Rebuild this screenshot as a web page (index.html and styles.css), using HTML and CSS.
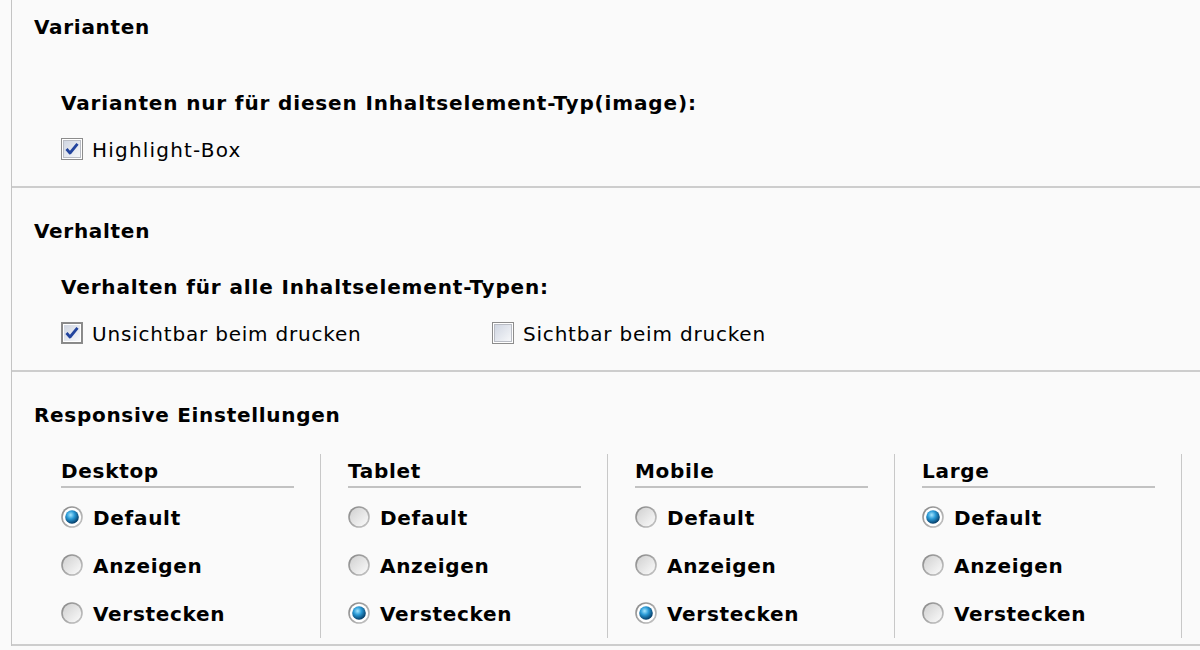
FILE: index.html
```html
<!DOCTYPE html>
<html lang="de">
<head>
<meta charset="utf-8">
<title>Inhaltselement Einstellungen</title>
<link rel="stylesheet" href="styles.css">
</head>
<body>
<svg class="defs" width="0" height="0" aria-hidden="true">
  <defs>
    <linearGradient id="cbFill" x1="0" y1="0" x2="1" y2="1">
      <stop offset="0" stop-color="#cfd5e1"/>
      <stop offset="1" stop-color="#f7f8fa"/>
    </linearGradient>
    <linearGradient id="rdRing" x1="0" y1="0" x2="1" y2="1">
      <stop offset="0" stop-color="#858585"/>
      <stop offset="1" stop-color="#c8c8c8"/>
    </linearGradient>
    <linearGradient id="rdFill" x1="0" y1="0" x2="1" y2="1">
      <stop offset="0" stop-color="#d0d0d0"/>
      <stop offset="1" stop-color="#fbfbfb"/>
    </linearGradient>
    <radialGradient id="rdDot" cx="0.4" cy="0.35" r="0.65">
      <stop offset="0" stop-color="#a6e6ff"/>
      <stop offset="0.45" stop-color="#2a9ad6"/>
      <stop offset="1" stop-color="#053d68"/>
    </radialGradient>
  </defs>
</svg>
<div class="panel">
  <section class="section first">
    <h2 class="title">Varianten</h2>
    <div class="group group-wide">
      <div class="group-title">Varianten nur für diesen Inhaltselement-Typ(image):</div>
      <div class="options">
        <label class="opt">
          <svg class="box" width="22" height="22" viewBox="0 0 22 22"><rect x="0.5" y="0.5" width="21" height="21" fill="#fff" stroke="#8c8c8c"/><rect x="2.5" y="2.5" width="17" height="17" fill="url(#cbFill)" stroke="#b9bcc4"/><path d="M5.5 11 L9 15 L16.5 5.8" fill="none" stroke="#22449e" stroke-width="2.8" stroke-linejoin="round"/></svg>
          <span class="wide">Highlight-Box</span>
        </label>
      </div>
    </div>
  </section>
  <section class="section">
    <h2 class="title">Verhalten</h2>
    <div class="group">
      <div class="group-title">Verhalten für alle Inhaltselement-Typen:</div>
      <div class="options">
        <label class="opt opt-first">
          <svg class="box" width="22" height="22" viewBox="0 0 22 22"><rect x="0.5" y="0.5" width="21" height="21" fill="#fff" stroke="#8c8c8c"/><rect x="1.5" y="1.5" width="19" height="19" fill="none" stroke="#111" stroke-dasharray="1 1"/><rect x="3" y="3" width="16" height="16" fill="url(#cbFill)"/><path d="M5.5 11 L9 15 L16.5 5.8" fill="none" stroke="#22449e" stroke-width="2.8" stroke-linejoin="round"/></svg>
          <span>Unsichtbar beim drucken</span>
        </label>
        <label class="opt">
          <svg class="box" width="22" height="22" viewBox="0 0 22 22"><rect x="0.5" y="0.5" width="21" height="21" fill="#fff" stroke="#8c8c8c"/><rect x="2.5" y="2.5" width="17" height="17" fill="url(#cbFill)" stroke="#b9bcc4"/></svg>
          <span>Sichtbar beim drucken</span>
        </label>
      </div>
    </div>
  </section>
  <section class="section last">
    <h2 class="title">Responsive Einstellungen</h2>
    <div class="cols">
      <div class="col">
        <div class="col-title">Desktop</div>
        <label class="radio"><svg class="rd" width="22" height="22" viewBox="0 0 22 22"><circle cx="11" cy="11" r="10.8" fill="url(#rdRing)"/><circle cx="11" cy="11" r="9.2" fill="#fff"/><circle cx="11" cy="11" r="6.8" fill="url(#rdDot)"/></svg><span>Default</span></label>
        <label class="radio"><svg class="rd" width="22" height="22" viewBox="0 0 22 22"><circle cx="11" cy="11" r="10.8" fill="url(#rdRing)"/><circle cx="11" cy="11" r="9.2" fill="url(#rdFill)"/></svg><span>Anzeigen</span></label>
        <label class="radio"><svg class="rd" width="22" height="22" viewBox="0 0 22 22"><circle cx="11" cy="11" r="10.8" fill="url(#rdRing)"/><circle cx="11" cy="11" r="9.2" fill="url(#rdFill)"/></svg><span>Verstecken</span></label>
      </div>
      <div class="col">
        <div class="col-title">Tablet</div>
        <label class="radio"><svg class="rd" width="22" height="22" viewBox="0 0 22 22"><circle cx="11" cy="11" r="10.8" fill="url(#rdRing)"/><circle cx="11" cy="11" r="9.2" fill="url(#rdFill)"/></svg><span>Default</span></label>
        <label class="radio"><svg class="rd" width="22" height="22" viewBox="0 0 22 22"><circle cx="11" cy="11" r="10.8" fill="url(#rdRing)"/><circle cx="11" cy="11" r="9.2" fill="url(#rdFill)"/></svg><span>Anzeigen</span></label>
        <label class="radio"><svg class="rd" width="22" height="22" viewBox="0 0 22 22"><circle cx="11" cy="11" r="10.8" fill="url(#rdRing)"/><circle cx="11" cy="11" r="9.2" fill="#fff"/><circle cx="11" cy="11" r="6.8" fill="url(#rdDot)"/></svg><span>Verstecken</span></label>
      </div>
      <div class="col">
        <div class="col-title">Mobile</div>
        <label class="radio"><svg class="rd" width="22" height="22" viewBox="0 0 22 22"><circle cx="11" cy="11" r="10.8" fill="url(#rdRing)"/><circle cx="11" cy="11" r="9.2" fill="url(#rdFill)"/></svg><span>Default</span></label>
        <label class="radio"><svg class="rd" width="22" height="22" viewBox="0 0 22 22"><circle cx="11" cy="11" r="10.8" fill="url(#rdRing)"/><circle cx="11" cy="11" r="9.2" fill="url(#rdFill)"/></svg><span>Anzeigen</span></label>
        <label class="radio"><svg class="rd" width="22" height="22" viewBox="0 0 22 22"><circle cx="11" cy="11" r="10.8" fill="url(#rdRing)"/><circle cx="11" cy="11" r="9.2" fill="#fff"/><circle cx="11" cy="11" r="6.8" fill="url(#rdDot)"/></svg><span>Verstecken</span></label>
      </div>
      <div class="col">
        <div class="col-title">Large</div>
        <label class="radio"><svg class="rd" width="22" height="22" viewBox="0 0 22 22"><circle cx="11" cy="11" r="10.8" fill="url(#rdRing)"/><circle cx="11" cy="11" r="9.2" fill="#fff"/><circle cx="11" cy="11" r="6.8" fill="url(#rdDot)"/></svg><span>Default</span></label>
        <label class="radio"><svg class="rd" width="22" height="22" viewBox="0 0 22 22"><circle cx="11" cy="11" r="10.8" fill="url(#rdRing)"/><circle cx="11" cy="11" r="9.2" fill="url(#rdFill)"/></svg><span>Anzeigen</span></label>
        <label class="radio"><svg class="rd" width="22" height="22" viewBox="0 0 22 22"><circle cx="11" cy="11" r="10.8" fill="url(#rdRing)"/><circle cx="11" cy="11" r="9.2" fill="url(#rdFill)"/></svg><span>Verstecken</span></label>
      </div>
    </div>
  </section>
</div>
</body>
</html>
```
FILE: styles.css
```css
html, body {
  margin: 0;
  padding: 0;
}
body {
  background: #fafafa;
  color: #000;
  font-family: "DejaVu Sans", Verdana, sans-serif;
  font-size: 20px;
  line-height: 24px;
  letter-spacing: 0.8px;
}
.defs {
  display: block;
  width: 0;
  height: 0;
  overflow: hidden;
}
.panel {
  margin-left: 11px;
  border-left: 1px solid #c4c4c4;
  background: #fafafa;
}
.section {
  border-bottom: 2px solid #cdcdcd;
  padding: 31px 0 24px 22px;
}
.section.first {
  padding-top: 15px;
}
.section.last {
  padding-top: 31px;
  padding-bottom: 6px;
}
.title {
  margin: 0;
  font-size: 20px;
  line-height: 24px;
  font-weight: bold;
  letter-spacing: 0.7px;
}
.group {
  padding-left: 27px;
  margin-top: 32px;
}
.group-wide {
  margin-top: 52px;
}
.group-title {
  font-weight: bold;
  letter-spacing: 0.85px;
}
.options {
  display: flex;
  margin-top: 23px;
}
.opt {
  display: flex;
  align-items: center;
  gap: 9px;
}
.opt-first {
  width: 431px;
}
.wide {
  letter-spacing: 1.2px;
}
.box {
  flex: none;
  display: block;
  margin-top: -2px;
}
.cols {
  display: flex;
  margin-top: 27px;
}
.col {
  width: 233px;
  padding: 5px 26px 12px 27px;
  border-right: 1px solid #c8c8c8;
}
.col-title {
  font-weight: bold;
  letter-spacing: 0.7px;
  padding-bottom: 3px;
  border-bottom: 2px solid #c2c2c2;
  margin-bottom: 18px;
}
.radio {
  display: flex;
  align-items: center;
  gap: 10px;
  font-weight: bold;
  letter-spacing: 0.7px;
  height: 24px;
  margin-bottom: 24px;
}
.radio:last-child {
  margin-bottom: 0;
}
.rd {
  flex: none;
  display: block;
  margin-top: -3px;
}
```
